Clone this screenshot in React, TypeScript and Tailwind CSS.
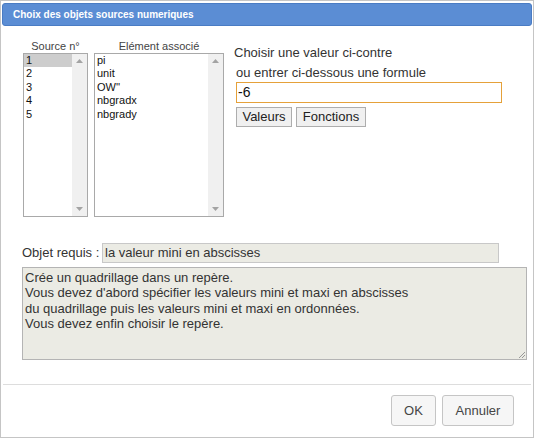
import React from "react";

function Scrollbar() {
  return (
    <div className="w-[15px] h-full bg-[#f0f0f0] flex flex-col items-center justify-between py-[5px]">
      <svg width="7" height="4" viewBox="0 0 7 4"><path d="M0 4 L3.5 0 L7 4 Z" fill="#a3a3a3" /></svg>
      <svg width="7" height="4" viewBox="0 0 7 4"><path d="M0 0 L3.5 4 L7 0 Z" fill="#a3a3a3" /></svg>
    </div>
  );
}

function ListBox({ items, selected, width, label }: { items: string[]; selected?: number; width: string; label: string }) {
  return (
    <div className={`flex flex-col ${width}`}>
      <div className="h-[13px] text-[11px] leading-[13px] text-center text-[#444]">{label}</div>
      <div className="h-[164px] border border-[#a9a9a9] bg-white flex">
        <div className="flex-1 flex flex-col text-[11px] leading-[13.4px] text-[#111]">
          {items.map((it, i) => (
            <div key={i} className={`pl-[2px] h-[13.4px] ${i === selected ? "bg-[#cdcdcd]" : ""}`}>{it}</div>
          ))}
        </div>
        <Scrollbar />
      </div>
    </div>
  );
}

export default function App() {
  return (
    <div className="w-[536px] h-[438px] bg-white font-['Liberation_Sans',Arial,sans-serif]">
      <div className="w-[534px] h-[438px] border border-[#c5c5c5] pt-[2px] px-[1px] flex flex-col">
        <div className="h-[23px] rounded-[3px] border border-[#4a7cc4] bg-[#5b8dd4] text-white font-bold text-[10px] leading-[21px] pl-[10px]">
          Choix des objets sources numeriques
        </div>
        <div className="flex items-start pl-[21px] pt-[14px]">
          <ListBox label="Source n°" width="w-[65px]" items={["1", "2", "3", "4", "5"]} selected={0} />
          <div className="w-[6px]" />
          <ListBox label="Elément associé" width="w-[130px]" items={["pi", "unit", "OW''", "nbgradx", "nbgrady"]} />
          <div className="ml-[10px] mt-[5px] flex flex-col text-[13px] text-[#333]">
            <div className="leading-[15px]">Choisir une valeur ci-contre</div>
            <div className="leading-[15px] mt-[5px] ml-[2px]">ou entrer ci-dessous une formule</div>
            <div className="ml-[2px] mt-[2px] w-[266px] h-[21px] border border-[#e5a13a] bg-white text-[14px] leading-[19px] pl-[1px] text-[#111]">-6</div>
            <div className="ml-[2px] mt-[4px] flex gap-[4px]">
              <div className="w-[56px] h-[20px] border border-[#adadad] bg-[#f0f0f0] text-[13px] leading-[18px] text-center text-[#222]">Valeurs</div>
              <div className="w-[70px] h-[20px] border border-[#adadad] bg-[#f0f0f0] text-[13px] leading-[18px] text-center text-[#222]">Fonctions</div>
            </div>
          </div>
        </div>
        <div className="flex items-center pl-[20px] mt-[26px] text-[13px] text-[#333]">
          <div className="w-[80px]">Objet requis :</div>
          <div className="w-[397px] h-[20px] border border-[#c8c8c8] bg-[#ebebe4] leading-[18px] pl-[2px] text-[#333]">la valeur mini en abscisses</div>
        </div>
        <div className="relative ml-[20px] mt-[4px] w-[505px] h-[93px] border border-[#b4b4b4] bg-[#ebebe4] text-[13px] leading-[15.3px] text-[#333] pl-[2px] pt-[2px]">
          <div>Crée un quadrillage dans un repère.</div>
          <div>Vous devez d'abord spécifier les valeurs mini et maxi en abscisses</div>
          <div>du quadrillage puis les valeurs mini et maxi en ordonnées.</div>
          <div>Vous devez enfin choisir le repère.</div>
          <svg className="absolute right-[1px] bottom-[1px]" width="7" height="7" viewBox="0 0 7 7">
            <path d="M7 1 L1 7 M7 4 L4 7" stroke="#999" strokeWidth="1" />
          </svg>
        </div>
        <div className="mt-[24px] border-t border-[#dddddd] mx-[1px]" />
        <div className="flex justify-end gap-[6px] mt-[10px] pr-[18px]">
          <div className="w-[45px] h-[31px] rounded-[3px] border border-[#c5c5c5] bg-[#f6f6f6] text-[13px] leading-[29px] text-center text-[#454545]">OK</div>
          <div className="w-[72px] h-[31px] rounded-[3px] border border-[#c5c5c5] bg-[#f6f6f6] text-[13px] leading-[29px] text-center text-[#454545]">Annuler</div>
        </div>
      </div>
    </div>
  );
}
